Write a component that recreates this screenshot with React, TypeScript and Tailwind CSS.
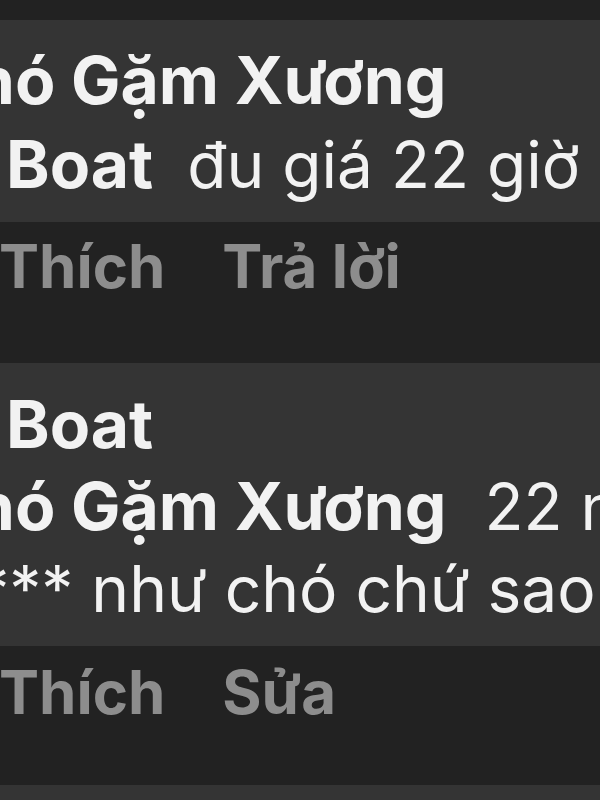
import React from "react";

export default function App() {
  return (
    <div
      className="w-[600px] h-[800px] overflow-hidden bg-[#222222] text-[#f2f2f2]"
      style={{ fontFamily: "Inter, 'Noto Sans', sans-serif" }}
    >
      <div className="h-[20px] bg-[#222222]" />
      {/* bubble 1 */}
      <div className="h-[202px] bg-[#343434] pt-[18px] overflow-hidden">
        <div className="text-[66px] leading-[84px] whitespace-nowrap font-bold ml-[-75px]">
          Chó Gặm Xương
        </div>
        <div className="text-[64px] leading-[84px] whitespace-nowrap ml-[6px]">
          <span className="font-bold text-[66px]">Boat</span>
          <span className="ml-[34px]">đu giá 22 giờ</span>
        </div>
      </div>
      {/* actions 1 */}
      <div className="h-[141px] bg-[#222222] pt-[9px]">
        <div className="flex gap-[57px] ml-[-1px] text-[60px] leading-[70px] font-bold text-[#8d8d8d] whitespace-nowrap">
          <span>Thích</span>
          <span>Trả lời</span>
        </div>
      </div>
      {/* bubble 2 */}
      <div className="h-[283px] bg-[#343434] pt-[20px] overflow-hidden">
        <div className="text-[66px] leading-[82px] whitespace-nowrap font-bold ml-[6px]">
          Boat
        </div>
        <div className="text-[64px] leading-[82px] whitespace-nowrap ml-[-75px]">
          <span className="font-bold text-[66px]">Chó Gặm Xương</span>
          <span className="ml-[38px]">22 năm</span>
        </div>
        <div className="text-[64px] leading-[82px] whitespace-nowrap ml-[-87px]">
          ***** như chó chứ sao
        </div>
      </div>
      {/* actions 2 */}
      <div className="h-[139px] bg-[#222222] pt-[11px]">
        <div className="flex gap-[57px] ml-[-1px] text-[60px] leading-[70px] font-bold text-[#8d8d8d] whitespace-nowrap">
          <span>Thích</span>
          <span>Sửa</span>
        </div>
      </div>
      <div className="h-[20px] bg-[#343434]" />
    </div>
  );
}
